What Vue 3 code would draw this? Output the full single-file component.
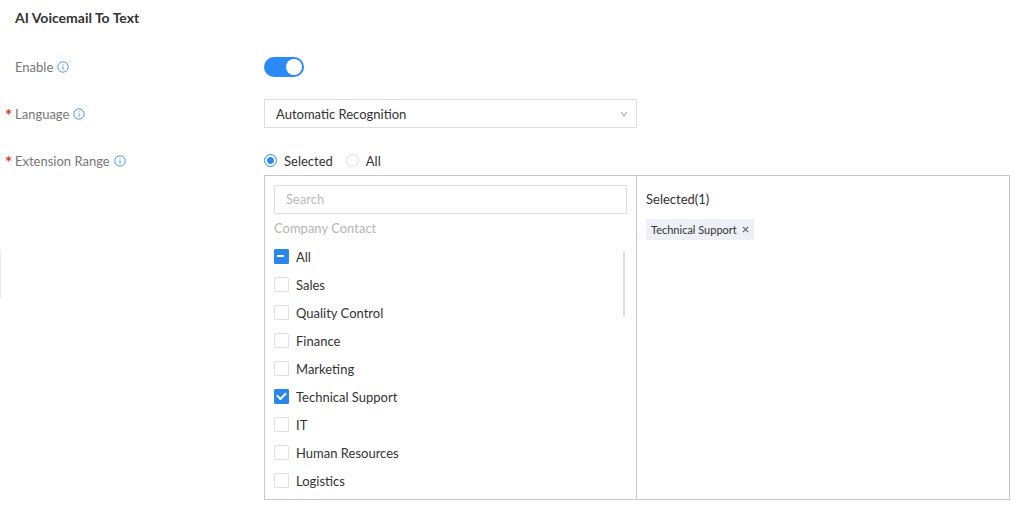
<script setup>
import { ref, computed, watchEffect, onMounted } from 'vue'

const enabled = ref(true)
const language = ref('auto')
const range = ref('selected')
const search = ref('')
const groups = ['Sales', 'Quality Control', 'Finance', 'Marketing', 'Technical Support', 'IT', 'Human Resources', 'Logistics']
const chosen = ref(['Technical Support'])

const visible = computed(() => groups.filter((g) => g.toLowerCase().includes(search.value.toLowerCase())))
const allChosen = computed(() => chosen.value.length === groups.length)
const someChosen = computed(() => chosen.value.length > 0 && !allChosen.value)

function toggleAll() {
  chosen.value = allChosen.value ? [] : [...groups]
}
function remove(name) {
  chosen.value = chosen.value.filter((g) => g !== name)
}

const allBox = ref(null)
onMounted(() => {
  watchEffect(() => {
    allBox.value.indeterminate = someChosen.value
  })
})
</script>

<template>
  <main class="page">
    <span class="edge"></span>
    <h1 class="title">AI Voicemail To Text</h1>

    <form class="form" @submit.prevent>
      <div class="field">
        <div class="label">
          <label for="enable">Enable</label>
          <svg class="info" viewBox="0 0 12 12"><circle cx="6" cy="6" r="5.2" /><path d="M6 5.2V8.8M6 3.2V4.2" /></svg>
        </div>
        <input id="enable" v-model="enabled" class="switch" type="checkbox" role="switch" />
      </div>

      <div class="field">
        <div class="label required">
          <label for="language">Language</label>
          <svg class="info" viewBox="0 0 12 12"><circle cx="6" cy="6" r="5.2" /><path d="M6 5.2V8.8M6 3.2V4.2" /></svg>
        </div>
        <div class="select">
          <select id="language" v-model="language">
            <option value="auto">Automatic Recognition</option>
          </select>
          <svg class="chevron" viewBox="0 0 8 8"><path d="M1 2L4 6L7 2" /></svg>
        </div>
      </div>

      <div class="field">
        <div class="label required">
          <span id="range-label">Extension Range</span>
          <svg class="info" viewBox="0 0 12 12"><circle cx="6" cy="6" r="5.2" /><path d="M6 5.2V8.8M6 3.2V4.2" /></svg>
        </div>
        <div>
          <div class="radios" role="radiogroup" aria-labelledby="range-label">
            <label><input v-model="range" type="radio" name="range" value="selected" />Selected</label>
            <label><input v-model="range" type="radio" name="range" value="all" />All</label>
          </div>

          <div class="transfer">
            <section class="source">
              <input v-model="search" class="search" type="text" placeholder="Search" aria-label="Search" />
              <p class="group">Company Contact</p>
              <ul class="list">
                <li>
                  <label><input ref="allBox" class="box" type="checkbox" :checked="allChosen" @change="toggleAll" />All</label>
                </li>
                <li v-for="g in visible" :key="g">
                  <label><input v-model="chosen" class="box" type="checkbox" :value="g" />{{ g }}</label>
                </li>
              </ul>
              <span class="thumb"></span>
            </section>
            <section class="target">
              <p class="count">Selected({{ chosen.length }})</p>
              <div class="tags">
                <span v-for="g in chosen" :key="g" class="tag">
                  {{ g }}
                  <button type="button" :aria-label="'Remove ' + g" @click="remove(g)">
                    <svg viewBox="0 0 8 8"><path d="M1 1L7 7M7 1L1 7" /></svg>
                  </button>
                </span>
              </div>
            </section>
          </div>
        </div>
      </div>
    </form>
  </main>
</template>

<style>
body {
  margin: 0;
  background: #fff;
}
</style>

<style scoped>
.page {
  position: relative;
  box-sizing: border-box;
  padding: 8px 14px 12px 15px;
  font-family: Lato, "Open Sans", sans-serif;
  font-size: 13px;
  line-height: 20px;
  color: #333;
}
.page * {
  box-sizing: border-box;
}
.edge {
  position: absolute;
  left: 0;
  top: 250px;
  width: 1px;
  height: 48px;
  background: #ececf0;
}
.title {
  margin: 0 0 24px;
  font-size: 14px;
  line-height: 20px;
  font-weight: 700;
}
.form {
  display: grid;
  gap: 18px;
}
.field {
  display: grid;
  grid-template-columns: 249px 1fr;
  align-items: start;
}
.label {
  position: relative;
  display: flex;
  align-items: center;
  gap: 4px;
  height: 29px;
  color: #777;
}
.required::before {
  content: "*";
  position: absolute;
  left: -10px;
  top: 7px;
  color: #d8382c;
  font-size: 17px;
  font-weight: 700;
}
.info {
  width: 12px;
  height: 12px;
  fill: none;
  stroke: #4a9eea;
  stroke-width: 1;
}
input,
select,
button {
  margin: 0;
  font: inherit;
  color: inherit;
  appearance: none;
}
.switch {
  align-self: center;
  width: 40px;
  height: 20px;
  padding: 2px;
  border-radius: 10px;
  background: #c8c8c8;
}
.switch::before {
  content: "";
  display: block;
  width: 16px;
  height: 16px;
  border-radius: 50%;
  background: #fff;
}
.switch:checked {
  background: #2a8af6;
}
.switch:checked::before {
  margin-left: auto;
}
.select {
  position: relative;
  width: 50%;
}
.select select {
  display: block;
  width: 100%;
  height: 29px;
  padding: 0 28px 0 11px;
  border: 1px solid #dedede;
  border-radius: 0;
  background: #fff;
}
.chevron {
  position: absolute;
  right: 9px;
  top: 11px;
  width: 8px;
  height: 8px;
  fill: none;
  stroke: #aaa;
  stroke-width: 1;
  pointer-events: none;
}
.radios {
  display: flex;
  gap: 13px;
  height: 29px;
}
.radios label {
  display: flex;
  align-items: center;
  gap: 7px;
}
.radios input {
  width: 13px;
  height: 13px;
  padding: 3px;
  border: 1px solid #ddd;
  border-radius: 50%;
}
.radios input:checked {
  border-color: #2a8af6;
  background: radial-gradient(circle, #2a8af6 3px, #fff 4px);
}
.transfer {
  display: grid;
  grid-template-columns: 1fr 1fr;
  border: 1px solid #c6c6c6;
}
.source {
  position: relative;
  padding: 9px 9px 4px;
  border-right: 1px solid #c6c6c6;
}
.search {
  display: block;
  width: 100%;
  height: 29px;
  padding: 0 11px 1px;
  border: 1px solid #dedede;
}
.search::placeholder {
  color: #bbb;
}
.group {
  margin: 0;
  line-height: 29px;
  color: #b5b5b5;
}
.list {
  margin: 0;
  padding: 0;
  list-style: none;
}
.list label {
  display: flex;
  align-items: center;
  gap: 7px;
  height: 28px;
}
.box {
  display: grid;
  place-items: center;
  width: 15px;
  height: 15px;
  margin-bottom: 1px;
  border: 1px solid #e0e0e0;
  border-radius: 1px;
}
.box:checked,
.box:indeterminate {
  border-color: #2a86ea;
  background: #2a86ea;
}
.box:checked::before {
  content: "";
  width: 7px;
  height: 4px;
  margin-bottom: 3px;
  border-left: 2px solid #fff;
  border-bottom: 2px solid #fff;
  transform: rotate(-45deg);
}
.box:indeterminate::before {
  content: "";
  width: 7px;
  height: 2px;
  margin: 0 2px 1px 0;
  background: #fff;
}
.thumb {
  position: absolute;
  right: 11px;
  top: 76px;
  width: 2px;
  height: 64px;
  background: #dcdcdc;
}
.target {
  padding: 13px 9px;
}
.count {
  margin: 0 0 10px;
}
.tags {
  display: flex;
  flex-wrap: wrap;
  gap: 6px;
}
.tag {
  display: flex;
  align-items: center;
  gap: 5px;
  height: 21px;
  padding: 0 5px;
  background: #edf0f6;
  font-size: 11px;
}
.tag button {
  display: flex;
  padding: 0;
  border: 0;
  background: none;
}
.tag svg {
  width: 7px;
  height: 7px;
  fill: none;
  stroke: #666;
  stroke-width: 1.4;
}
</style>
